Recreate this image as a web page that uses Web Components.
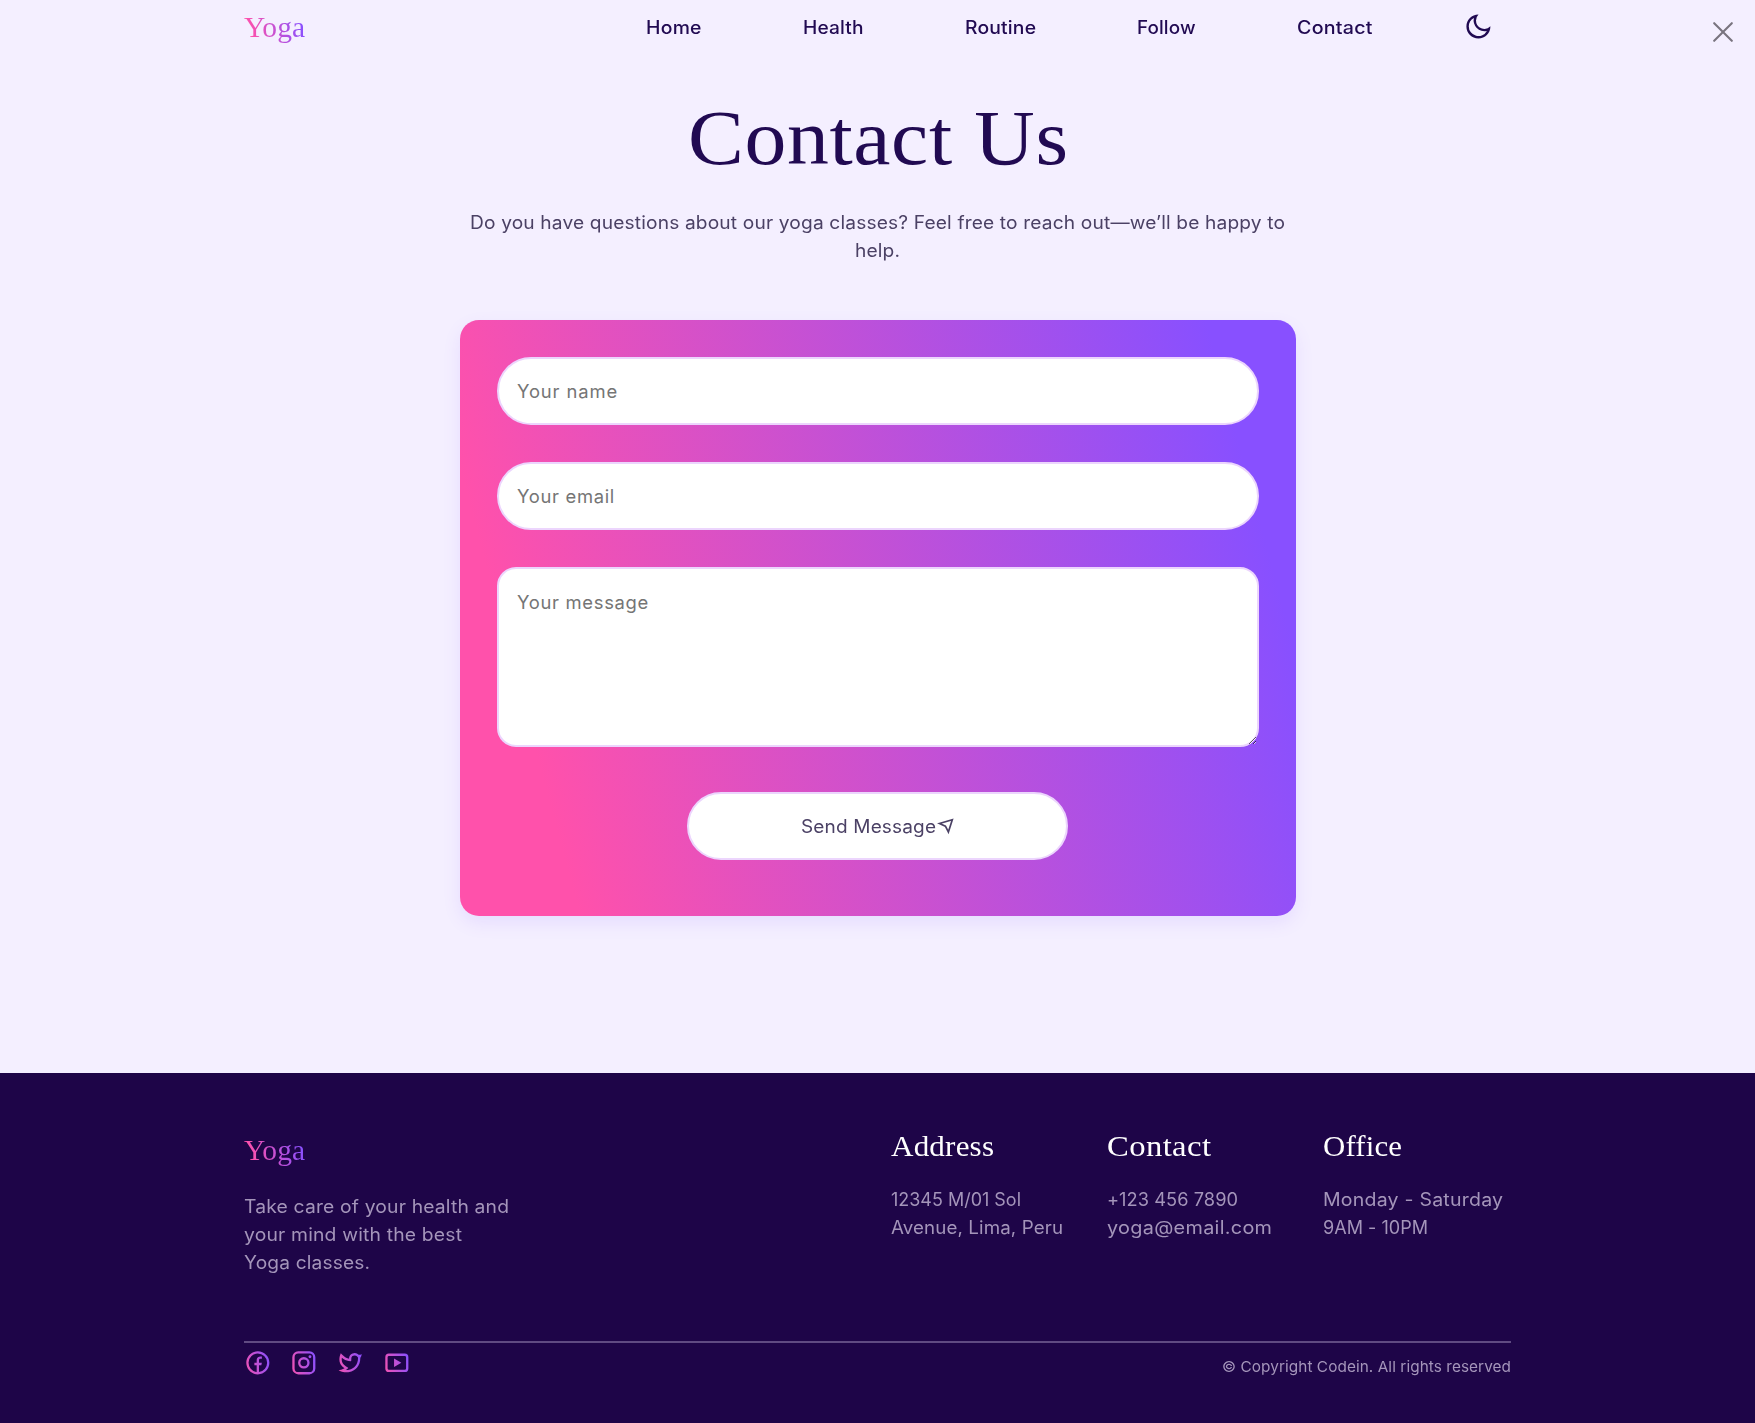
<!DOCTYPE html>
<html lang="en">
<head>
<meta charset="utf-8">
<title>Yoga - Contact Us</title>
<style>
html,body{margin:0;height:100%}
body{background:#f4efff;font-family:Inter,"Open Sans",sans-serif;font-size:18px;color:#4b4165;
--serif:"Liberation Serif",serif;--grad:linear-gradient(75deg,#ff51ab 12%,#8850ff 91%);--ink:#210a52}
</style>
</head>
<body>
<yoga-page></yoga-page>
<script>
const pen = document.createElement('canvas').getContext('2d');
function naturalWidth(el, text) {
  const s = getComputedStyle(el);
  pen.font = `${s.fontWeight} ${s.fontSize} ${s.fontFamily}`;
  return pen.measureText(text).width;
}
function define(name, html, init) {
  customElements.define(name, class extends HTMLElement {
    constructor() {
      super();
      this.attachShadow({ mode: 'open' }).innerHTML = html;
    }
    connectedCallback() { if (init) init.call(this, this.shadowRoot); }
  });
}

// One line of text, widened to the width given in "span".
define('text-line', `<style>
:host{display:block;white-space:nowrap}
span{display:block;width:max-content;transform-origin:0 50%;background:var(--text-fill,none);-webkit-background-clip:text;background-clip:text}
</style><span><slot></slot></span>`, function (root) {
  const width = +this.getAttribute('span');
  const text = this.textContent;
  const natural = naturalWidth(this, text);
  // A small part of the difference is letter spacing, the rest is glyph width.
  const spacing = (width - natural) * 0.2 / text.length;
  const inner = root.querySelector('span');
  inner.style.letterSpacing = spacing + 'px';
  inner.style.transform = `scaleX(${width / (natural + spacing * (text.length - 1))})`;
  this.style.width = width + 'px';
});

define('brand-logo', `<style>
:host{display:block;font:400 29.5px/40px var(--serif)}
text-line{--text-fill:var(--grad);color:transparent}
</style><text-line span="61">Yoga</text-line>`);

define('site-nav', `<style>
:host{display:block;height:53px;padding:0 22px 0 244px}
.row{display:flex;align-items:center;height:53px}
nav{display:flex;margin:1px 0 0 340.5px;color:var(--ink);font-weight:500}
nav text-line{margin-right:var(--g)}
.moon{display:block;fill:var(--ink);margin-top:-1px}
.close{display:block;margin:11px 0 0 auto;stroke:#79747f;stroke-width:2.1;stroke-linecap:round}
</style><div class="row"><brand-logo></brand-logo>
<nav>
<text-line span="55.5" style="--g:101.5px">Home</text-line>
<text-line span="60.5" style="--g:101.5px">Health</text-line>
<text-line span="71" style="--g:101.5px">Routine</text-line>
<text-line span="58.5" style="--g:101.5px">Follow</text-line>
<text-line span="75.5" style="--g:91.5px">Contact</text-line>
</nav>
<svg class="moon" width="28.8" height="28.8" viewBox="0 0 24 24"><path d="M10 7a7 7 0 0 0 12 4.9v.1c0 5.523-4.477 10-10 10S2 17.523 2 12 6.477 2 12 2h.1A6.979 6.979 0 0 0 10 7zm-6 5a8 8 0 0 0 15.062 3.762A9 9 0 0 1 8.238 4.938 7.999 7.999 0 0 0 4 12z"/></svg>
<svg class="close" width="20" height="20" viewBox="0 0 20 20"><path d="M1.2 1.2l17.6 17.6M18.8 1.2L1.2 18.8"/></svg>
</div>`);

define('form-field', `<style>
:host{display:block}
input,textarea{display:block;box-sizing:border-box;width:100%;height:68px;margin:0;border:2px solid #ecd5fd;border-radius:34px;background:#fff;padding:0 18.5px;font:400 18.4px/28px Inter,sans-serif;outline:0}
textarea{height:180px;border-radius:19px;padding:19px 18.5px;resize:vertical}
::placeholder{color:#757575;opacity:1}
</style>`, function (root) {
  const f = document.createElement(this.hasAttribute('multiline') ? 'textarea' : 'input');
  f.placeholder = this.getAttribute('label');
  root.append(f);
  f.style.letterSpacing = (this.getAttribute('span') - naturalWidth(f, f.placeholder)) / f.placeholder.length + 'px';
});

define('send-button', `<style>
:host{display:block}
button{display:flex;align-items:center;justify-content:center;gap:1px;box-sizing:border-box;width:381px;height:68px;margin:0 auto;border:2px solid #ecd5fd;border-radius:34px;background:#fff;color:#4b4165;font:400 18px/28px Inter,sans-serif;padding:1px 0 0}
svg{display:block;fill:none;stroke:currentColor;stroke-width:1.7;stroke-linejoin:miter}
</style><button><text-line span="135">Send Message</text-line><svg width="17" height="17" viewBox="0 0 17 17"><path d="M2.4 5.5L15.3 1.7L11.4 14L8.4 8.2Z"/></svg></button>`);

define('contact-form', `<style>
:host{display:flex;flex-direction:column;gap:37px;box-sizing:border-box;width:836px;height:596px;padding:37px;border-radius:19px;background:var(--grad);box-shadow:0 7px 18px rgba(130,80,255,.11)}
send-button{margin-top:8px}
</style>
<form-field label="Your name" span="101"></form-field>
<form-field label="Your email" span="98"></form-field>
<form-field label="Your message" span="132" multiline></form-field>
<send-button></send-button>`);

define('contact-section', `<style>
:host{display:flex;flex-direction:column;align-items:center;height:1020px}
h1{margin:38px 0 24px;font:400 78.5px/94px var(--serif);color:var(--ink)}
p{margin:0 0 55px;display:flex;flex-direction:column;align-items:center;line-height:28px}
</style>
<h1><text-line span="380">Contact Us</text-line></h1>
<p><text-line span="815">Do you have questions about our yoga classes? Feel free to reach out—we’ll be happy to</text-line><text-line span="45">help.</text-line></p>
<contact-form></contact-form>`);

define('info-column', `<style>
:host{display:block;line-height:28px}
h3{margin:0 0 19.5px;font:400 29.5px/40px var(--serif);color:#fff}
</style><h3><slot name="title"></slot></h3><slot></slot>`);

define('social-icons', `<style>
:host{display:flex;gap:18.6px}
svg{display:block;fill:none;stroke:url(#g);stroke-width:2}
.f{fill:url(#g);stroke:none}
</style>${[
  '<path class="f" d="M13 19.938A8.001 8.001 0 0 0 12 4a8 8 0 0 0-1 15.938V14H9v-2h2v-1.654c0-1.337.14-1.822.4-2.311A2.726 2.726 0 0 1 12.536 6.9c.382-.205.857-.328 1.687-.381.329-.021.755.005 1.278.08v1.9H15c-.917 0-1.296.043-1.522.164a.727.727 0 0 0-.314.314c-.12.226-.164.45-.164 1.368V12h2.5l-.5 2h-2v5.938zM12 22C6.477 22 2 17.523 2 12S6.477 2 12 2s10 4.477 10 10-4.477 10-10 10z"/>',
  '<rect x="3" y="3" width="18" height="18" rx="4.2"/><circle cx="12" cy="12" r="4"/><circle class="f" cx="17.3" cy="6.7" r="1.25"/>',
  '<path class="f" d="M15.3 5.55a2.9 2.9 0 0 0-2.9 2.847l-.028 1.575a.6.6 0 0 1-.68.583l-1.561-.212c-2.054-.28-4.022-1.226-5.91-2.799-.598 3.31.57 5.603 3.383 7.372l1.747 1.098a.6.6 0 0 1 .034.993L7.793 18.17c.947.059 1.846.017 2.592-.131 4.718-.942 7.855-4.492 7.855-10.348 0-.478-1.012-2.141-2.94-2.141zm-4.9 2.81a4.9 4.9 0 0 1 8.385-3.355c.711-.005 1.316.175 2.669-.645-.335 1.64-.5 2.352-1.214 3.331 0 7.642-4.697 11.358-9.463 12.309-3.268.652-8.02-.419-9.382-1.841.694-.054 3.514-.357 5.144-1.55C5.16 15.7-.329 12.47 3.278 3.786c1.693 1.977 3.41 3.323 5.15 4.037 1.158.475 1.442.465 1.973.538z"/>',
  '<rect x="3" y="5" width="18" height="14" rx="2.2"/><path class="f" d="M9.6 8.3L15.9 12L9.6 15.7Z"/>'
].map(p => `<svg width="27.7" height="27.7" viewBox="0 0 24 24"><defs><linearGradient id="g" gradientUnits="userSpaceOnUse" x1="1" y1="15" x2="23" y2="9"><stop offset="0" stop-color="#f052b4"/><stop offset="1" stop-color="#8850ff"/></linearGradient></defs>${p}</svg>`).join('')}`);

define('site-footer', `<style>
:host{display:flex;flex-direction:column;box-sizing:border-box;height:350px;background:#1e0548;color:#a495ba;padding:53px 244px 0;line-height:28px}
.top{display:flex;justify-content:space-between;height:215px}
.about{padding-top:3.5px}
.about text-line:first-of-type{margin-top:23.5px}
.cols{display:grid;grid-template-columns:repeat(3,188px);gap:28px}
.bottom{display:flex;justify-content:space-between;border-top:2px solid #604b82}
social-icons{margin-top:6px}
.copy{font-size:14.8px;margin-top:10px}
</style>
<div class="top"><div class="about"><brand-logo></brand-logo>
<text-line span="265">Take care of your health and</text-line>
<text-line span="218">your mind with the best</text-line>
<text-line span="126">Yoga classes.</text-line></div>
<div class="cols">
<info-column><text-line slot="title" span="103">Address</text-line><text-line span="130">12345 M/01 Sol</text-line><text-line span="172">Avenue, Lima, Peru</text-line></info-column>
<info-column><text-line slot="title" span="104">Contact</text-line><text-line span="131">+123 456 7890</text-line><text-line span="165">yoga@email.com</text-line></info-column>
<info-column><text-line slot="title" span="79">Office</text-line><text-line span="180">Monday - Saturday</text-line><text-line span="105">9AM - 10PM</text-line></info-column>
</div></div>
<div class="bottom"><social-icons></social-icons><text-line class="copy" span="289">© Copyright Codein. All rights reserved</text-line></div>`);

define('yoga-page', `<style>:host{display:block;height:1423px;overflow:hidden}</style>
<site-nav></site-nav><contact-section></contact-section><site-footer></site-footer>`);
</script>
</body>
</html>
